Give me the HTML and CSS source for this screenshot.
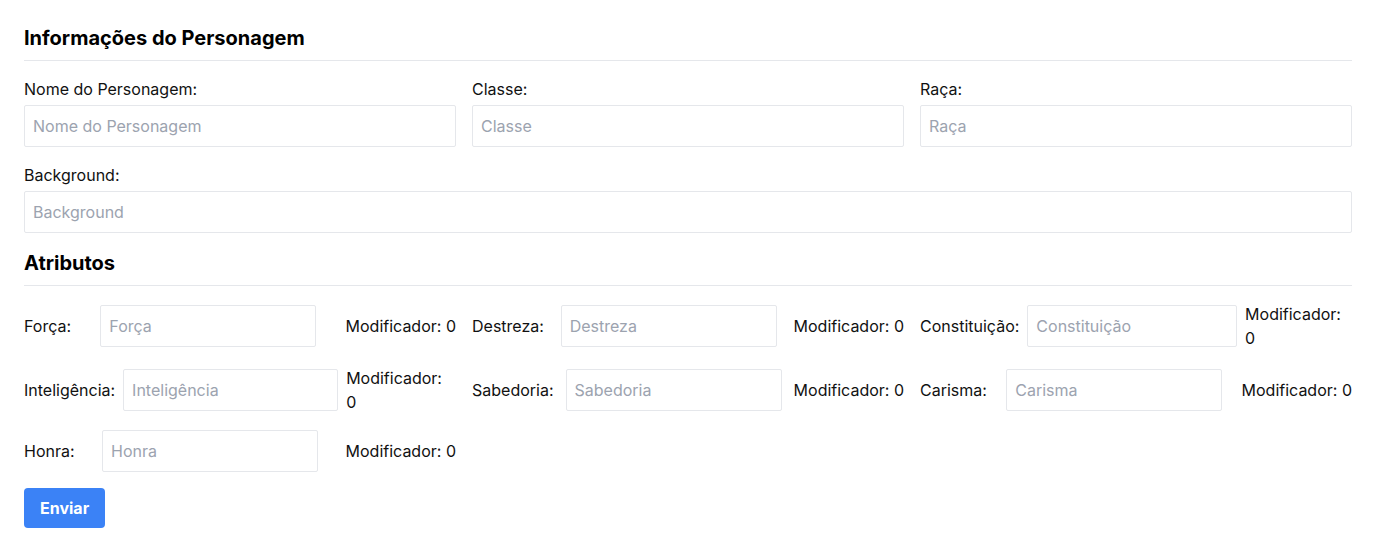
FILE: index.html
```html
<!DOCTYPE html>
<html lang="pt">
<head>
<meta charset="utf-8">
<title>Ficha</title>
<link rel="stylesheet" href="styles.css">
</head>
<body>
<form class="sheet">
  <h2 class="section-title">Informações do Personagem</h2>
  <div class="info-grid">
    <div class="field">
      <label class="field-label">Nome do Personagem:</label>
      <input class="text-input" type="text" placeholder="Nome do Personagem">
    </div>
    <div class="field">
      <label class="field-label">Classe:</label>
      <input class="text-input" type="text" placeholder="Classe">
    </div>
    <div class="field">
      <label class="field-label">Raça:</label>
      <input class="text-input" type="text" placeholder="Raça">
    </div>
    <div class="field field-wide">
      <label class="field-label">Background:</label>
      <input class="text-input" type="text" placeholder="Background">
    </div>
  </div>

  <h2 class="section-title section-title-spaced">Atributos</h2>
  <div class="attr-grid">
    <div class="attr">
      <label class="attr-label">Força:</label>
      <input class="text-input attr-input" type="text" placeholder="Força">
      <span class="attr-mod">Modificador: 0</span>
    </div>
    <div class="attr">
      <label class="attr-label">Destreza:</label>
      <input class="text-input attr-input" type="text" placeholder="Destreza">
      <span class="attr-mod">Modificador: 0</span>
    </div>
    <div class="attr">
      <label class="attr-label">Constituição:</label>
      <input class="text-input attr-input" type="text" placeholder="Constituição">
      <span class="attr-mod">Modificador: 0</span>
    </div>
    <div class="attr">
      <label class="attr-label">Inteligência:</label>
      <input class="text-input attr-input" type="text" placeholder="Inteligência">
      <span class="attr-mod">Modificador: 0</span>
    </div>
    <div class="attr">
      <label class="attr-label">Sabedoria:</label>
      <input class="text-input attr-input" type="text" placeholder="Sabedoria">
      <span class="attr-mod">Modificador: 0</span>
    </div>
    <div class="attr">
      <label class="attr-label">Carisma:</label>
      <input class="text-input attr-input" type="text" placeholder="Carisma">
      <span class="attr-mod">Modificador: 0</span>
    </div>
    <div class="attr">
      <label class="attr-label">Honra:</label>
      <input class="text-input attr-input" type="text" placeholder="Honra">
      <span class="attr-mod">Modificador: 0</span>
    </div>
  </div>

  <button class="submit" type="button">Enviar</button>
</form>
</body>
</html>
```

FILE: styles.css
```css
* { box-sizing: border-box; }

html, body {
  margin: 0;
  padding: 0;
  background: #ffffff;
}

body {
  font-family: Inter, "Liberation Sans", sans-serif;
  font-size: 16px;
  line-height: 24px;
  color: #111111;
}

.sheet {
  padding: 24px;
  display: flex;
  flex-direction: column;
  align-items: flex-start;
}

.section-title {
  align-self: stretch;
  margin: 0 0 16px 0;
  padding-bottom: 8px;
  font-size: 20px;
  line-height: 28px;
  font-weight: 700;
  color: #000000;
  border-bottom: 1px solid #e5e7eb;
}

.section-title-spaced {
  margin-top: 16px;
}

.info-grid {
  align-self: stretch;
  display: grid;
  grid-template-columns: repeat(3, 1fr);
  gap: 16px;
}

.field {
  display: flex;
  flex-direction: column;
  gap: 4px;
}

.field-wide {
  grid-column: 1 / -1;
}

.field-label {
  color: #111111;
}

.text-input {
  height: 42px;
  width: 100%;
  padding: 0 8px;
  border: 1px solid #e5e7eb;
  border-radius: 2px;
  font-family: inherit;
  font-size: 16px;
  color: #111111;
  background: #ffffff;
  outline: none;
}

.text-input::placeholder {
  color: #9ca3af;
}

.attr-grid {
  align-self: stretch;
  display: grid;
  grid-template-columns: repeat(3, 1fr);
  gap: 16px;
}

.attr {
  display: flex;
  align-items: center;
  justify-content: space-between;
  gap: 8px;
  min-width: 0;
}

.attr-label {
  flex-shrink: 0;
  white-space: nowrap;
}

.attr-input {
  width: 216px;
  flex-shrink: 1;
  min-width: 0;
}

.attr-mod {
  flex-shrink: 1;
}

.submit {
  margin-top: 16px;
  height: 40px;
  padding: 0 16px;
  border: none;
  border-radius: 4px;
  background: #3b82f6;
  color: #ffffff;
  font-family: inherit;
  font-size: 16px;
  font-weight: 700;
  cursor: pointer;
}
```
